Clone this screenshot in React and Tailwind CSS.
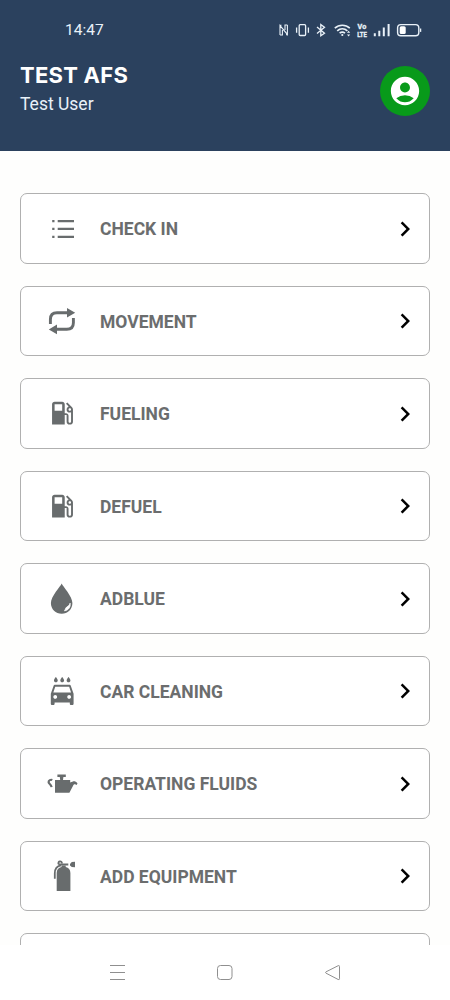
// App.jsx
import React from 'react';
import {
  MdAccountCircle,
  MdLocalCarWash,
  MdLocalGasStation,
  MdNavigateNext,
} from 'react-icons/md';

function StatusIcons() {
  return (
    <svg className="w-[150px] h-5" viewBox="0 0 150 20" fill="none" stroke="#e9f1f8" strokeWidth="1.3">
      {/* NFC */}
      <path d="M5 15V5.6l7.4 8.8V5M5 5.3h1.5M12.4 14.7H11M5 15h2.4V10M12.4 5H10v5" strokeWidth="1.1" />
      {/* Vibrate */}
      <rect x="24.2" y="4.7" width="6.4" height="10.8" rx="1" />
      <path d="M21.6 7.5v5.2M33.4 7.5v5.2" />
      {/* Bluetooth */}
      <path d="M42 7l7.5 6.2-3.7 2.6V4.6l3.7 2.6L42 13.4" />
      {/* Wifi */}
      <path d="M59.8 8.2c4.3-4 10.7-4 15 0M62.2 10.8c3-2.6 7.2-2.6 10.2 0M64.6 13.2c1.6-1.3 3.8-1.3 5.4 0" strokeWidth="1.6" />
      <circle cx="67.3" cy="15" r="1.1" fill="#e9f1f8" stroke="none" />
      <path d="M73.6 10.8l1.6 2h-3.2zM73.6 16.6l1.6-2h-3.2z" fill="#e9f1f8" stroke="none" />
      {/* VoLTE */}
      <g fill="#e9f1f8" stroke="#e9f1f8" strokeWidth=".3" fontFamily="Roboto, sans-serif" fontWeight="700" fontSize="6.5">
        <text x="82.6" y="8.9" textLength="8.6" lengthAdjust="spacingAndGlyphs">Vo</text>
        <text x="82.2" y="16.5" textLength="9.6" lengthAdjust="spacingAndGlyphs">LTE</text>
      </g>
      {/* Signal */}
      <path d="M99.8 13.3v3M104.3 10.8v5.5M108.8 7.6v8.7M113.6 4v12.3" strokeWidth="2" />
      {/* Battery */}
      <rect x="122.6" y="4.6" width="21.2" height="11.2" rx="3.2" strokeWidth="1.4" />
      <rect x="124.7" y="6.3" width="6" height="7.8" rx="1.5" fill="#fff" stroke="none" />
      <path d="M145.6 8.5v3.4" />
    </svg>
  );
}

function ListIcon() {
  return (
    <svg className="size-10" viewBox="0 0 40 40" fill="currentColor">
      <path d="M10.2 10.9h2.3v2.3h-2.3zM15.7 10.9H32v2.3H15.7zM10.2 18.8h2.3v2.3h-2.3zM15.7 18.8H32v2.3H15.7zM10.2 26.7h2.3v2.3h-2.3zM15.7 26.7H32v2.3H15.7z" />
    </svg>
  );
}

function RepeatIcon() {
  return (
    <svg className="size-10" viewBox="0 0 40 40" fill="none" stroke="currentColor" strokeWidth="2.9">
      <path d="M8.4 23v-4.6c0-4.2 2.4-6.6 6.6-6.6h11M31.4 17v4.7c0 4.2-2.4 6.6-6.6 6.6H14" />
      <path d="M25 7L33.2 11.8 25 16.5zM15 23.6L6.8 28.4l8.2 4.8z" fill="currentColor" stroke="none" />
    </svg>
  );
}

function DropIcon() {
  return (
    <svg className="size-10" viewBox="0 0 40 40">
      <path d="M19.7 4.4c-1.2 3-10.8 12.6-10.8 19.7 0 6.3 4.8 10.7 10.8 10.7s10.7-4.4 10.7-10.7c0-7.1-9.6-16.7-10.7-19.7z" fill="currentColor" />
      <path d="M28.1 24.2c.7 3.7-1.5 7-5.6 7.6 1-1.2.9-2.7 2.2-3.7 1.9-1.2 2.7-2 3.4-3.9z" fill="#fff" stroke="#fff" strokeWidth=".8" />
    </svg>
  );
}

function OilCanIcon() {
  return (
    <svg className="size-10" viewBox="0 0 40 40" fill="currentColor">
      <path d="M15.4 10.6h8.4V13h-2.4l-.4 3h7.2v2.4c2.3-.7 3.3-1.6 5.1-1 .9.3 1.6 1 2.2 1.8l-.8 1.9c-1-.8-2-1-3.1-.4l-4.2 8H13V16h5.2l-.4-3h-2.4z" />
      <path d="M10.3 16c-1.6-.7-3.8.3-3.7 2.1.1 2 2.4 1.8 3 5" fill="none" stroke="currentColor" strokeWidth="2.2" />
    </svg>
  );
}

function ExtinguisherIcon() {
  return (
    <svg className="size-10" viewBox="0 0 40 40" fill="currentColor">
      <path d="M14.7 35.1V17c0-3.5 1.8-5.4 4.8-6V9.5h4.2V11c3 .6 4.7 2.5 4.7 6v18.1z" />
      <path d="M16.3 7.4h10v2.2h-10zM28 7.9l1.8-1.8 3.2-.4v5.6l-3.2-.4L28 9.6z" />
      <path d="M16.4 8.2c-.3-3.6 3.2-3.6 3.6-.7M19 9.3c-4.3.7-6.2 3.8-6.2 8v5.5" fill="none" stroke="currentColor" strokeWidth="1.8" />
    </svg>
  );
}

function FuelIcon() {
  return <MdLocalGasStation className="size-[30.4px]" />;
}

function CarWashIcon() {
  return <MdLocalCarWash className="size-[30.4px]" />;
}

const MENU_ITEMS = [
  { label: 'CHECK IN', icon: ListIcon },
  { label: 'MOVEMENT', icon: RepeatIcon },
  { label: 'FUELING', icon: FuelIcon },
  { label: 'DEFUEL', icon: FuelIcon },
  { label: 'ADBLUE', icon: DropIcon },
  { label: 'CAR CLEANING', icon: CarWashIcon },
  { label: 'OPERATING FLUIDS', icon: OilCanIcon },
  { label: 'ADD EQUIPMENT', icon: ExtinguisherIcon },
];

function MenuCard({ label, icon: Icon }) {
  return (
    <button className="w-full h-[70.5px] shrink-0 flex items-center pl-[21px] pr-[9px] bg-white border border-[#b0b0b0] rounded-[7px]">
      <span className="size-10 flex items-center justify-center text-[#686c6d]">
        <Icon />
      </span>
      <span className="ml-[18px] pt-[3px] flex-1 text-left text-[17.5px] font-bold leading-none text-[#6b6d6e]">
        {label}
      </span>
      <MdNavigateNext className="size-[30px] text-black" />
    </button>
  );
}

export default function App() {
  return (
    <div className="w-[450px] h-[1000px] flex flex-col overflow-hidden bg-[#fefefd] font-['Roboto',sans-serif]">
      {/* Header */}
      <header className="h-[151px] shrink-0 bg-[#2b415e] text-[#e9f1f8]">
        <div className="flex items-center justify-between h-[60px] pl-[65px] pr-[25px]">
          <span className="pt-0.5 text-[15.5px] leading-none">14:47</span>
          <StatusIcons />
        </div>
        <div className="flex items-start justify-between px-5">
          <div className="pt-px">
            <h1 className="font-['Inter',sans-serif] text-[22px] leading-[28px] font-bold tracking-[0.25px] text-white">TEST AFS</h1>
            <p className="pt-px text-[17.5px] leading-[28px]">Test User</p>
          </div>
          <button className="mt-1.5 size-[50px] flex items-center justify-center rounded-full bg-[#089a1a] text-white">
            <MdAccountCircle className="size-[34px]" />
          </button>
        </div>
      </header>

      {/* Menu */}
      <main className="flex-1 min-h-0 overflow-hidden flex flex-col gap-[22px] px-5 pt-[42.4px]">
        {MENU_ITEMS.map((item) => (
          <MenuCard key={item.label} label={item.label} icon={item.icon} />
        ))}
        <div className="h-[70.5px] shrink-0 bg-white border border-[#b0b0b0] rounded-[7px]" />
      </main>

      {/* System navigation */}
      <nav className="h-[55px] shrink-0 flex items-center justify-between px-[109px] bg-white text-[#8f8f8f]">
        <svg className="size-4" viewBox="0 0 16 16" fill="none" stroke="currentColor">
          <path d="M1 .5h15M1 7.5h15M1 14.5h15" />
        </svg>
        <svg className="size-4" viewBox="0 0 16 16" fill="none" stroke="currentColor">
          <rect x=".5" y=".5" width="14.5" height="14" rx="3" />
        </svg>
        <svg className="size-4" viewBox="0 0 16 16" fill="none" stroke="currentColor" strokeLinejoin="round">
          <path d="M.9 6.9L13.2.7q1.3-.5 1.3.8v12.2q0 1.3-1.3.8L.9 8.1q-.8-.6 0-1.2z" />
        </svg>
      </nav>
    </div>
  );
}
